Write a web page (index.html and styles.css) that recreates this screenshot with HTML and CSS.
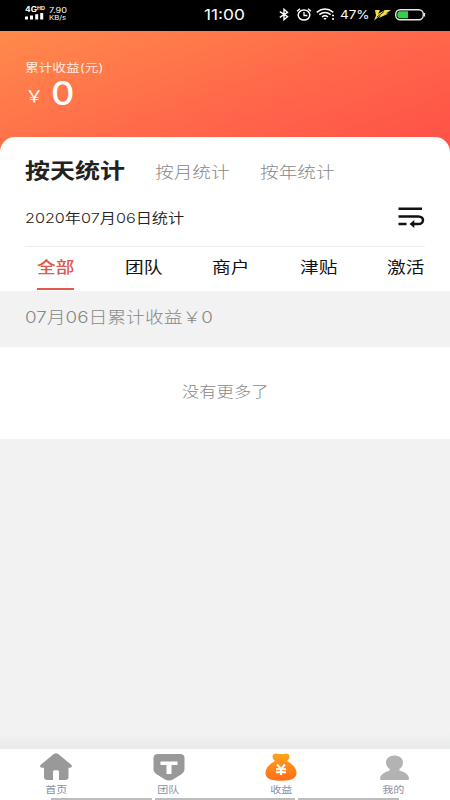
FILE: index.html
```html
<!DOCTYPE html>
<html lang="zh-CN">
<head>
<meta charset="utf-8">
<title>收益</title>
<link rel="stylesheet" href="styles.css">
</head>
<body>
<div class="app">
  <header class="status">
    <div class="signal">
      <div class="net"><span class="wide">4G<sup>HD</sup></span></div>
      <svg width="19" height="7" viewBox="0 0 19 7" fill="#fff"><path d="M0 3.500h3V6.500H0zM5 2.500h3v4H5zM10.200 1.200h3v5.300h-3zM15.200 0h3v6.500h-3z"/></svg>
    </div>
    <div class="speed"><span class="wide rate">7.90</span><span class="wide unit">KB/s</span></div>
    <div class="clock"><span class="wide">11:00</span></div>
    <div class="indicators">
      <svg width="10" height="13" viewBox="0 0 10 13" fill="none" stroke="#fff" stroke-width="1.400"><path d="M.8 3.700l7.700 5L5 11.700V1.300l3.500 3-7.700 5"/></svg>
      <svg width="16" height="13" viewBox="0 0 16 13" fill="none" stroke="#fff"><ellipse cx="8" cy="7" rx="5.800" ry="5.100" stroke-width="1.500"/><path d="M8 4v3.500h3.300M1 3.200L4 .8M15 3.200L12 .8" stroke-width="1.300"/></svg>
      <svg width="19" height="13" viewBox="0 0 19 13" fill="none" stroke="#fff" stroke-width="1.500"><path d="M.7 4.300Q9 -2.200 17.300 4.300M3.300 6.700Q9 2.200 14.700 6.700M6 9Q9 6.600 12 9"/><path d="M7.300 10h3.400L9 12z" fill="#fff" stroke="none"/><path d="M16 7.500h2M16 11h2" stroke-width="1.700"/></svg>
      <span class="percent"><span class="wide">47%</span></span>
      <svg width="17" height="12" viewBox="0 0 17 12" fill="#f3df45"><path d="M1 1h5L4 5l7-4h6l-5 3.500h2.500L5 9l2-3-7 5.500 2-5z"/><path d="M3 8l7-5.500" stroke="#000" stroke-width=".8"/></svg>
      <svg width="31" height="12" viewBox="0 0 31 12"><rect x=".7" y=".7" width="27.600" height="10" rx="4.500" fill="none" stroke="#e8e8e8" stroke-width="1.400"/><path d="M5 2.200h8v7H5Q2.300 9 2.300 5.700T5 2.200z" fill="#2fd04b"/><path d="M29.500 4v3.500" stroke="#e8e8e8" stroke-width="1.200"/></svg>
    </div>
  </header>

  <section class="hero">
    <div class="hero-label"><span class="wide">累计收益(元)</span></div>
    <div class="amount"><span class="wide yen">￥</span><span class="num">0</span></div>
  </section>

  <main class="card">
    <nav class="periods">
      <span class="wide active">按天统计</span><span class="wide">按月统计</span><span class="wide">按年统计</span>
    </nav>
    <div class="date-row">
      <span class="wide">2020年07月06日统计</span>
      <svg width="27" height="21" viewBox="0 0 27 21" fill="none" stroke="#111" stroke-width="2.500"><path d="M.5 1.700h23.500M.5 9.400h20C26.700 9.400 26.200 17 20.500 17H15M.5 17h8"/><path d="M11.500 17l4.800-4v8z" fill="#111" stroke="none"/></svg>
    </div>
    <nav class="tabs">
      <div class="tab on"><span class="wide">全部</span></div>
      <div class="tab"><span class="wide">团队</span></div>
      <div class="tab"><span class="wide">商户</span></div>
      <div class="tab"><span class="wide">津贴</span></div>
      <div class="tab"><span class="wide">激活</span></div>
    </nav>
  </main>
  <div class="summary"><span class="wide">07月06日累计收益￥0</span></div>
  <div class="empty"><span class="wide">没有更多了</span></div>
  <div class="blank"></div>

  <footer>
    <nav class="bottom">
      <div class="item">
        <svg width="34" height="28" viewBox="0 0 34 28" fill="#999"><path d="M14.500 1.200Q17 -.5 19.500 1.200L32.500 12Q33.800 14.500 31 14.700H29.500V24q0 3-3.500 3H20v-8.500q0-1.500-3-1.500t-3 1.500V27H8.500Q5 27 5 24V14.700H3Q.2 14.500 1.500 12z"/></svg>
        <span class="wide">首页</span>
      </div>
      <div class="item">
        <svg width="34" height="28" viewBox="0 0 34 28"><path d="M6 1h22q4.500 0 4.500 4v11q0 3-3.500 5.500l-8 5q-4 2-8 0l-8-5Q1.500 19 1.500 16V5q0-4 4.500-4z" fill="#999"/><path d="M8.500 8.500h17V12h-6v9h-5v-9h-6z" fill="#fff"/></svg>
        <span class="wide">团队</span>
      </div>
      <div class="item">
        <svg width="34" height="28" viewBox="0 0 34 28"><defs><linearGradient id="bag" x1="0" y1="0" x2="0" y2="1"><stop offset="0" stop-color="#ffa41b"/><stop offset="1" stop-color="#ff6c18"/></linearGradient></defs><path d="M12 .5q5 1 10 0 3.500 0 3.500 3 0 2.500-2.500 4.500Q32.500 13 32.500 20q0 4.500-5 6.500-10.500 2.500-21 0-5-2-5-6.500Q1.500 13 11 8 8.500 6 8.500 3.500q0-3 3.500-3z" fill="url(#bag)"/><path d="M13 11.500l4 4.500 4-4.500M12 16.300h10M12 19.300h10M17 16v6" fill="none" stroke="#fff" stroke-width="2"/></svg>
        <span class="wide">收益</span>
      </div>
      <div class="item">
        <svg width="34" height="28" viewBox="0 0 34 28" fill="#b3b3b3"><path d="M17.500 2.500c5 0 8.500 3 8.500 7 0 3-1.500 5-3.500 6.200v2c6 1.300 9.500 4 9.500 8.300q0 1-1 1H4.500q-1.500 0-1.500-1c0-4 4-7 9.500-8.300v-2C10.500 14.500 9 12.500 9 9.500c0-4 3.500-7 8.500-7z"/></svg>
        <span class="wide">我的</span>
      </div>
    </nav>
    <div class="strips"><i></i><i></i><i></i></div>
  </footer>
</div>
</body>
</html>
```
FILE: styles.css
```css
* { box-sizing: border-box; }
body {
  margin: 0;
  font-family: Inter, "Noto Sans CJK SC", sans-serif;
  color: #222;
}
svg { display: block; flex: none; }
.app {
  width: 450px;
  height: 800px;
  display: flex;
  flex-direction: column;
  overflow: hidden;
  background: #f2f2f2;
}
.wide {
  display: block;
  white-space: nowrap;
  transform: scaleX(1.19);
  transform-origin: left center;
}

.status {
  height: 31px;
  flex: none;
  background: #000;
  color: #fff;
  display: grid;
  grid-template-columns: 24px 155px 75px 1fr;
  padding-left: 25px;
}
.signal { padding-top: 6px; }
.net { width: 18px; font-size: 7px; line-height: 7px; height: 7px; font-weight: 700; }
.net sup { font-size: 4.500px; line-height: 0; vertical-align: 2px; }
.speed { padding-top: 6px; line-height: 9px; }
.rate { font-size: 7px; transform: scaleX(1.3); }
.unit { font-size: 6.500px; line-height: 7px; }
.clock { font-size: 14.500px; line-height: 30px; }
.indicators { display: flex; align-items: center; height: 29px; }
.indicators svg:nth-of-type(2) { margin-left: 7px; }
.indicators svg:nth-of-type(3) { margin-left: 4px; }
.percent { width: 34px; margin-left: 5px; font-size: 11.300px; line-height: 30px; padding-top: 1px; }
.indicators svg:nth-of-type(5) { margin-left: 4px; }

.hero {
  height: 122px;
  flex: none;
  padding: 29px 25px 0;
  color: #fff;
  background: linear-gradient(160deg, #ff8a4b 0%, #ff6b4a 50%, #ff4f48 100%);
}
.hero-label { font-size: 11.500px; line-height: 16px; color: #ffe9dc; }
.amount { display: grid; grid-template-columns: 26px 1fr; line-height: 34px; }
.yen { font-size: 15.500px; padding-top: 4px; }
.num {
  font-size: 33px;
  font-weight: 500;
  transform: scaleX(1.1);
  transform-origin: left center;
}

.card {
  height: 154px;
  flex: none;
  margin-top: -16px;
  padding: 0 25px;
  background: #fff;
  border-radius: 15px 15px 0 0;
}
.periods {
  display: grid;
  grid-template-columns: 130px 105px 1fr;
  height: 62px;
  padding-top: 5px;
  line-height: 61px;
  font-size: 15.700px;
  font-weight: 300;
  color: #888;
}
.periods .active { font-size: 21px; line-height: 57px; font-weight: 700; color: #222; }
.date-row {
  height: 48px;
  display: flex;
  justify-content: space-between;
  align-items: center;
  padding-bottom: 11px;
  border-bottom: 1px solid #eee;
  font-size: 13.600px;
  font-weight: 350;
}
.tabs { height: 44px; display: flex; margin: 0 -25px; padding-left: 12px; }
.tab {
  width: 87.500px;
  height: 44px;
  flex: none;
  display: flex;
  justify-content: center;
  font-size: 15.700px;
  line-height: 42px;
  color: #111;
}
.tab .wide, .empty .wide, .item .wide { transform-origin: center; }
.on { color: #e2574c; }
.on .wide { height: 43px; font-weight: 500; border-bottom: 2px solid #e2574c; }

.summary {
  height: 56px;
  flex: none;
  padding-left: 25px;
  font-size: 15.800px;
  line-height: 53px;
  font-weight: 300;
  color: #888;
}
.empty {
  height: 92px;
  flex: none;
  display: flex;
  justify-content: center;
  background: #fff;
  color: #888;
  font-size: 14.500px;
  line-height: 90px;
  font-weight: 300;
}
.blank {
  flex: 1;
  background: linear-gradient(#f2f2f2 calc(100% - 16px), #e8e9eb);
}
footer { height: 51px; flex: none; background: #fff; }
.bottom { height: 49px; display: grid; grid-template-columns: repeat(4, 112.500px); }
.item {
  display: flex;
  flex-direction: column;
  align-items: center;
  padding-top: 4px;
  font-size: 9.300px;
  line-height: 17px;
  color: #8b8fa3;
}
.strips {
  display: grid;
  grid-template-columns: 101px 140px 101px;
  gap: 3px;
  height: 2px;
  padding-left: 51px;
}
.strips i { background: #bdbdbd; }
```
